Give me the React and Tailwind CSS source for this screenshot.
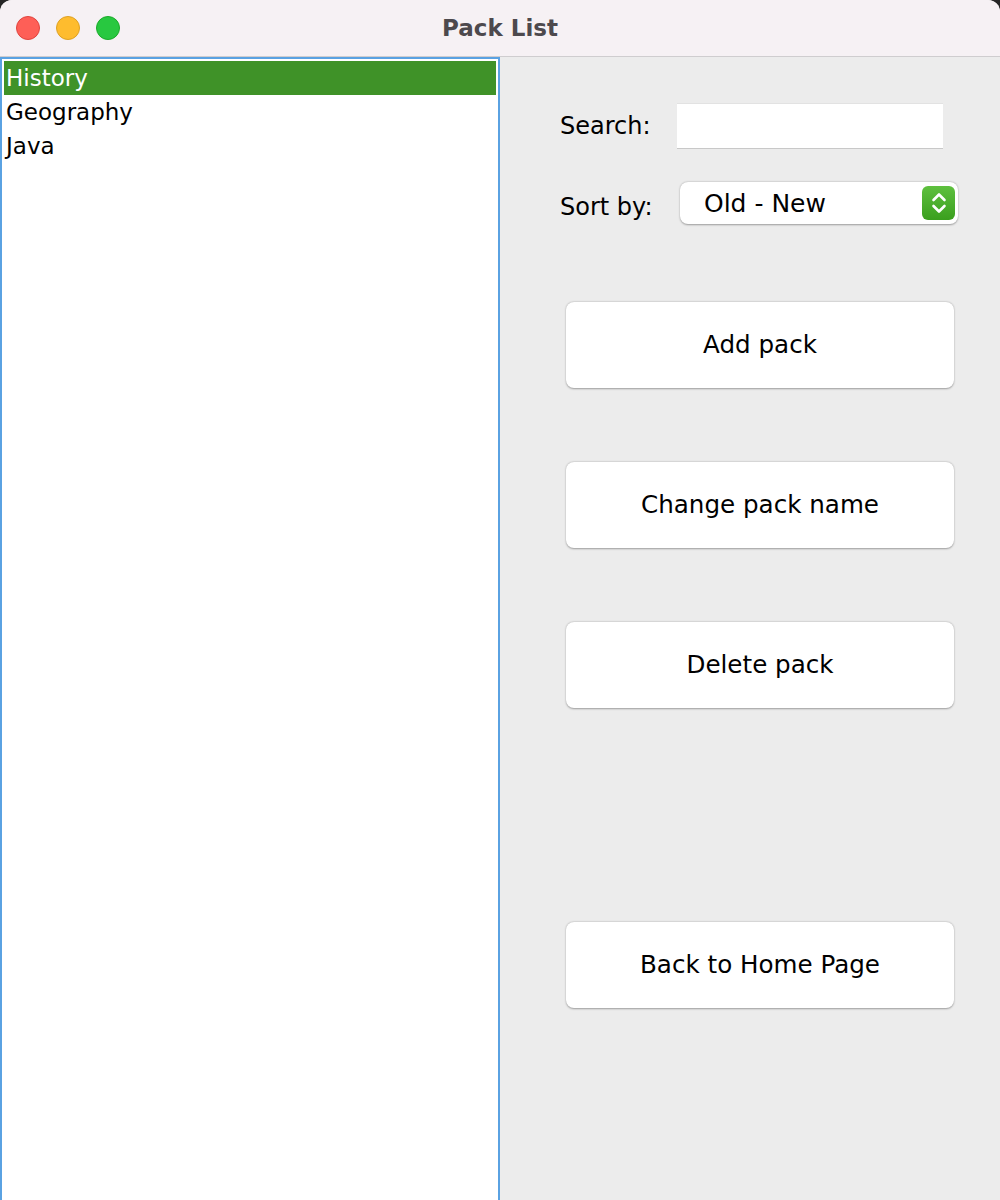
import React from "react";

const font = { fontFamily: '"DejaVu Sans", "Lucida Grande", sans-serif' };

function Btn({ children }) {
  return (
    <button className="w-[388px] h-[86px] rounded-[8px] bg-white text-[24.6px] text-black shadow-[0_0.5px_2px_rgba(0,0,0,0.35)] flex items-center justify-center">
      {children}
    </button>
  );
}

export default function App() {
  return (
    <div className="w-[1000px] h-[1200px] bg-[#262626]" style={font}>
      <div className="w-full h-full rounded-t-[12px] overflow-hidden flex flex-col bg-[#ececec]">
        <div className="h-[57px] shrink-0 bg-[#f6f1f4] border-b border-[#cfcdcf] relative flex items-center justify-center">
          <div className="absolute left-[16px] top-[16px] flex gap-[16px]">
            <span className="w-[24px] h-[24px] rounded-full bg-[#fe5f57] border border-[#e0443e]" />
            <span className="w-[24px] h-[24px] rounded-full bg-[#febc2e] border border-[#dea123]" />
            <span className="w-[24px] h-[24px] rounded-full bg-[#28c840] border border-[#1aab29]" />
          </div>
          <span className="text-[23px] font-bold text-[#4d494d]">Pack List</span>
        </div>
        <div className="flex flex-1">
          <div className="w-[500px] border-2 border-b-0 border-[#5aa2e2] bg-white p-[2px] flex flex-col">
            <div className="h-[34px] bg-[#3f9228] text-white text-[23px] leading-[34px] pl-[2px]">History</div>
            <div className="h-[34px] text-black text-[23px] leading-[34px] pl-[2px]">Geography</div>
            <div className="h-[34px] text-black text-[23px] leading-[34px] pl-[2px]">Java</div>
          </div>
          <div className="flex-1 flex flex-col pl-[60px]">
            <div className="flex items-center mt-[46px] h-[46px]">
              <span className="text-[24px] text-black w-[117px]">Search:</span>
              <div className="w-[266px] h-[46px] bg-white border-b border-[#c8c8c8] border-t border-t-[#e2e2e2]" />
            </div>
            <div className="flex items-center mt-[33px] h-[42px]">
              <span className="text-[24px] text-black w-[120px] pt-[8px]">Sort by:</span>
              <div className="w-[278px] h-[42px] bg-white rounded-[8px] shadow-[0_0.5px_2px_rgba(0,0,0,0.35)] flex items-center justify-between pl-[24px] pr-[3px]">
                <span className="text-[25px] text-black pt-[2px]">Old - New</span>
                <div className="w-[33px] h-[34px] rounded-[6px] bg-gradient-to-b from-[#5ec03e] to-[#3a9f1d] flex items-center justify-center">
                  <svg width="18" height="28" viewBox="0 0 18 28" fill="none" stroke="white" strokeWidth="2.6" strokeLinecap="round" strokeLinejoin="round">
                    <path d="M3.5 11 L9 5.5 L14.5 11" />
                    <path d="M3.5 17 L9 22.5 L14.5 17" />
                  </svg>
                </div>
              </div>
            </div>
            <div className="flex flex-col pl-[6px] mt-[78px] gap-[74px]">
              <Btn>Add pack</Btn>
              <Btn>Change pack name</Btn>
              <Btn>Delete pack</Btn>
            </div>
            <div className="pl-[6px] mt-[214px]">
              <Btn>Back to Home Page</Btn>
            </div>
          </div>
        </div>
      </div>
    </div>
  );
}
